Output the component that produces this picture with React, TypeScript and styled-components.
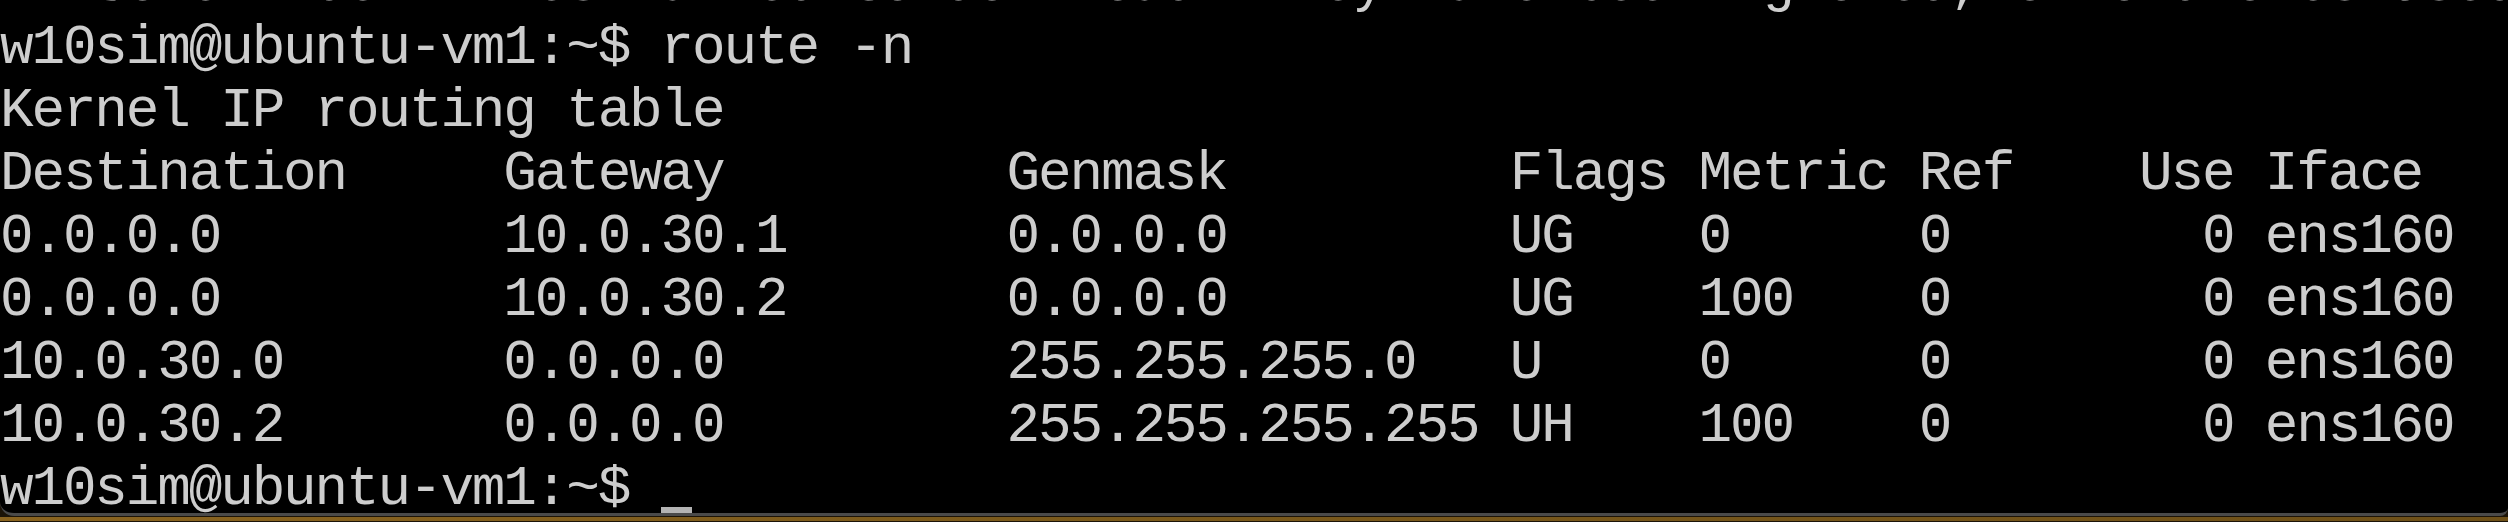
import React from 'react';
import styled, { createGlobalStyle } from 'styled-components';

const GlobalStyle = createGlobalStyle`
  html, body {
    margin: 0;
    padding: 0;
    background: #000;
    overflow: hidden;
  }
`;

const Screen = styled.div`
  width: 2508px;
  height: 522px;
  display: flex;
  flex-direction: column;
  background: #1c1408;
  overflow: hidden;
`;

const Terminal = styled.div`
  height: 513px;
  flex: none;
  background: #000;
  border-bottom: 3px solid #4a4a4a;
  border-radius: 0 0 8px 14px;
  overflow: hidden;
`;

const Output = styled.pre`
  margin: -46px 0 0 0;
  font-family: 'Liberation Mono', monospace;
  font-size: 56px;
  letter-spacing: -2.15px;
  line-height: 63px;
  color: #cdcdcd;
  white-space: pre;
`;

const Line = styled.div`
  height: 63px;
`;

const Warn = styled.span`
  color: #e8e020;
`;

const Cursor = styled.span`
  display: inline-block;
  width: 31px;
  height: 6px;
  vertical-align: -9px;
  background: #b4b4b4;
`;

const Desk = styled.div`
  flex: none;
  height: 4px;
  margin-top: 1px;
  background: linear-gradient(90deg, #8a6420 0%, #7b5a1c 40%, #6e5018 100%);
`;

const PROMPT = 'w10sim@ubuntu-vm1:~$ ';

const ROUTES = [
  'Kernel IP routing table',
  'Destination     Gateway         Genmask         Flags Metric Ref    Use Iface',
  '0.0.0.0         10.0.30.1       0.0.0.0         UG    0      0        0 ens160',
  '0.0.0.0         10.0.30.2       0.0.0.0         UG    100    0        0 ens160',
  '10.0.30.0       0.0.0.0         255.255.255.0   U     0      0        0 ens160',
  '10.0.30.2       0.0.0.0         255.255.255.255 UH    100    0        0 ens160',
];

export default function App() {
  return (
    <Screen>
      <GlobalStyle />
      <Terminal>
        <Output>
          <Line>
            <Warn>W:</Warn> Some index files failed to download. They have been ignored, or old ones used instead.
          </Line>
          <Line>{PROMPT}route -n</Line>
          {ROUTES.map((row, i) => (
            <Line key={i}>{row}</Line>
          ))}
          <Line>
            {PROMPT}
            <Cursor />
          </Line>
        </Output>
      </Terminal>
      <Desk />
    </Screen>
  );
}
